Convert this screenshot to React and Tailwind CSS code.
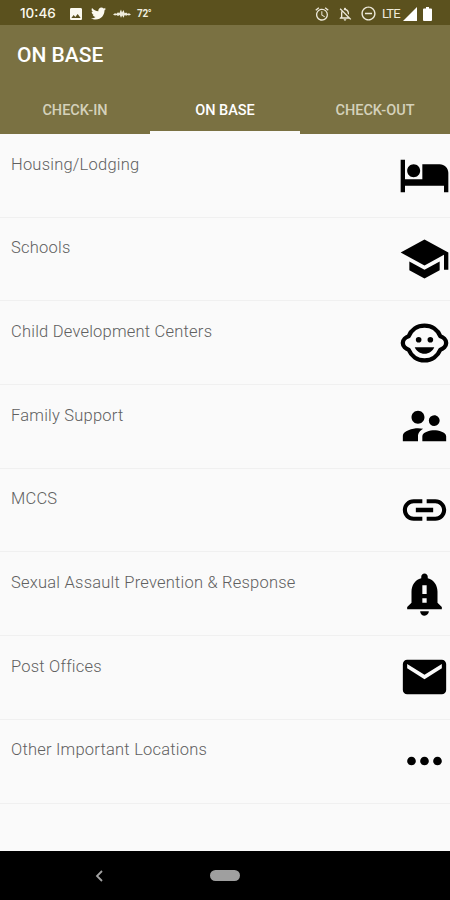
import {
  MdAlarm,
  MdEmail,
  MdHotel,
  MdImage,
  MdLink,
  MdMoreHoriz,
  MdNotificationImportant,
  MdOutlineNotificationsOff,
  MdRemoveCircleOutline,
  MdSchool,
  MdSupervisorAccount,
} from "react-icons/md";
import { FaTwitter } from "react-icons/fa";

const tabs = ["CHECK-IN", "ON BASE", "CHECK-OUT"];

function ChildFace({ className }) {
  return (
    <svg viewBox="0 0 24 24" className={className} fill="currentColor">
      <path
        fill="none"
        stroke="currentColor"
        strokeWidth="2"
        strokeLinejoin="round"
        d="M12 4C8.600 4 5.900 6 4.700 8.900 3.400 9.300 2 10.500 2 12s1.400 2.700 2.700 3.100C5.900 18 8.600 20 12 20s6.100-2 7.300-4.900C20.600 14.700 22 13.500 22 12s-1.400-2.700-2.700-3.100C18.100 6 15.400 4 12 4z"
      />
      <circle cx="9.300" cy="10.500" r="1.300" />
      <circle cx="14.700" cy="10.500" r="1.300" />
      <path d="M7.500 14c.76 1.770 2.490 3 4.500 3s3.740-1.230 4.500-3z" />
    </svg>
  );
}

const items = [
  { label: "Housing/Lodging", icon: MdHotel },
  { label: "Schools", icon: MdSchool },
  { label: "Child Development Centers", icon: ChildFace },
  { label: "Family Support", icon: MdSupervisorAccount },
  { label: "MCCS", icon: MdLink },
  { label: "Sexual Assault Prevention & Response", icon: MdNotificationImportant },
  { label: "Post Offices", icon: MdEmail },
  { label: "Other Important Locations", icon: MdMoreHoriz },
];

function StatusBar() {
  return (
    <div className="flex h-[25px] shrink-0 items-center justify-between bg-[#5b511e] pt-[2px] pl-[20px] pr-[18px] text-[#fbf9ef]">
      <div className="flex items-center">
        <span className="w-[48px] font-[Inter] text-[13.5px] leading-none font-medium">10:46</span>
        <MdImage className="size-[16px]" />
        <FaTwitter className="ml-[7px] size-[15px]" />
        <svg viewBox="0 0 18 10" className="ml-[7px] h-[10px] w-[18px] text-[#f0edde]" fill="currentColor">
          <path d="M0 5.5 2 4.3l1.500.4L5 3.300l1.300 1L8 .5l1 3L10.500 1l1.200 3.300 1.500-.8 1.300 1.200 1.500-.4 2 1.200-2 1-1.500-.4-1.300.6-1.500-.8-1.200 2.800-1.300-2.300L8 8.800 6.700 6 5 7 3.500 6 2 6.500z" />
        </svg>
        <span className="ml-[6px] text-[10px] leading-none font-bold tracking-[-0.3px] text-[#f0edde]">72°</span>
      </div>
      <div className="flex items-center text-[#eeeadb]">
        <MdAlarm className="size-[16px]" />
        <MdOutlineNotificationsOff className="ml-[7px] size-[16px]" />
        <MdRemoveCircleOutline className="ml-[7px] size-[17px]" />
        <span className="ml-[5px] w-[21px] text-[13px] leading-none tracking-[-0.9px]">LTE</span>
        <svg viewBox="0 0 14 14" className="size-[14px] text-white" fill="currentColor">
          <path d="M14 0v14H0z" />
        </svg>
        <svg viewBox="0 0 9 14" className="ml-[6px] h-[14px] w-[9px] text-white" fill="currentColor">
          <path d="M3 0h3v1.5h2a1 1 0 0 1 1 1V13a1 1 0 0 1-1 1H1a1 1 0 0 1-1-1V2.5a1 1 0 0 1 1-1h2z" />
        </svg>
      </div>
    </div>
  );
}

function Header() {
  return (
    <header className="flex h-[109px] shrink-0 flex-col justify-between bg-[#7a7142]">
      <h1 className="pt-[18px] pl-[17px] text-[21px] leading-[25px] font-medium text-white">ON BASE</h1>
      <nav className="grid h-[49px] grid-cols-3">
        {tabs.map((tab) => (
          <button
            key={tab}
            className={`border-b-[3px] pt-[5px] text-[14.5px] font-medium ${
              tab === "ON BASE" ? "border-[#fafafa] text-white" : "border-transparent text-[#d5d1bb]"
            }`}
          >
            {tab}
          </button>
        ))}
      </nav>
    </header>
  );
}

export default function App() {
  return (
    <div className="flex h-[900px] w-[450px] flex-col overflow-hidden bg-[#fafafa] font-[Roboto,sans-serif]">
      <StatusBar />
      <Header />

      <ul className="flex-1">
        {items.map(({ label, icon: Icon }) => (
          <li
            key={label}
            className="flex h-[83.7px] items-center justify-between border-b border-[#f0f0f0] pl-[11px]"
          >
            <span className="self-start pt-[18.5px] text-[16.5px] leading-6 font-light tracking-[0.22px] text-[#606060]">
              {label}
            </span>
            <Icon className="-mr-px h-[52px] w-[53px] shrink-0 text-black" />
          </li>
        ))}
      </ul>

      {/* System navigation */}
      <div className="flex h-[49px] shrink-0 items-center bg-black">
        <svg viewBox="0 0 8 12" className="ml-[95px] h-[12px] w-[8px]" fill="none" stroke="#a3a3a3" strokeWidth="1.8">
          <path d="M7 1 2 6l5 5" />
        </svg>
        <div className="ml-[107px] h-[11px] w-[30px] rounded-full bg-[#9f9f9f]" />
      </div>
    </div>
  );
}
